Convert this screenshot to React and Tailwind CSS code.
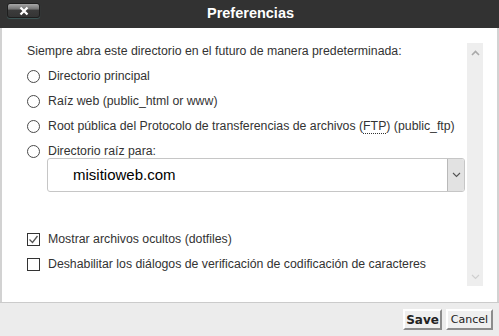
import React from 'react';

const Radio = () => (
    <span className="w-[13px] h-[13px] rounded-full border border-[#4a4a4a] bg-white shrink-0" />
);

const Check = ({ checked }) => (
    <span className="w-[13px] h-[13px] border border-[#333] bg-white shrink-0 flex items-center justify-center">
        {checked && (
            <svg width="11" height="11" viewBox="0 0 11 11">
                <path d="M1.5 5.5l3 3 5-6.5" fill="none" stroke="#555" strokeWidth="1.3" />
            </svg>
        )}
    </span>
);

export default function App() {
    return (
        <div className="w-[499px] h-[336px] flex flex-col bg-white overflow-hidden font-['Liberation_Sans',Arial,sans-serif] text-[#333]">
            {/* header */}
            <div className="relative h-[28px] shrink-0 bg-[#323232] flex items-center justify-center">
                <button className="absolute left-[7px] top-[3px] w-[33px] h-[15px] rounded-[3px] border border-[#1e1e1e] bg-[linear-gradient(#a8a8a8,#727272_40%,#3c3c3c_46%,#353535)] shadow-[0_1px_1px_#3e5858] flex items-center justify-center">
                    <svg width="10" height="10" viewBox="0 0 10 10">
                        <path d="M1.5 1.5l7 7M8.5 1.5l-7 7" stroke="white" strokeWidth="2.3" />
                    </svg>
                </button>
                <h1 className="text-white font-bold text-[14.5px] ml-[2px]">Preferencias</h1>
            </div>

            {/* body */}
            <div className="flex-1 min-h-0 flex border-l-2 border-r-2 border-[#d2d2d2]">
                <div className="flex-1 pl-[25px] pt-[11px] text-[12.3px]">
                    <div className="h-[25px] flex items-center">
                        Siempre abra este directorio en el futuro de manera predeterminada:
                    </div>
                    <label className="h-[25px] flex items-center gap-[8px]">
                        <Radio />
                        <span>Directorio principal</span>
                    </label>
                    <label className="h-[25px] flex items-center gap-[8px]">
                        <Radio />
                        <span>Raíz web (public_html or www)</span>
                    </label>
                    <label className="h-[25px] flex items-center gap-[8px]">
                        <Radio />
                        <span>
                            Root pública del Protocolo de transferencias de archivos (<abbr className="no-underline border-b border-dotted border-[#333]">FTP</abbr>) (public_ftp)
                        </span>
                    </label>
                    <label className="h-[25px] flex items-center gap-[8px]">
                        <Radio />
                        <span>Directorio raíz para:</span>
                    </label>

                    <div className="-mt-[6px] ml-[20px] w-[418px] h-[34px] flex border border-[#c6c6c6] rounded-[3px] overflow-hidden">
                        <div className="flex-1 flex items-center pl-[25px] text-[15px] text-black">
                            misitioweb.com
                        </div>
                        <div className="w-[17px] bg-[#e2e2e2] border-l border-[#b9b9b9] flex items-center justify-center">
                            <svg width="9" height="6" viewBox="0 0 9 6">
                                <path d="M1 1l3.5 3.5L8 1" fill="none" stroke="#555" strokeWidth="1.1" />
                            </svg>
                        </div>
                    </div>

                    <label className="mt-[35px] h-[25px] flex items-center gap-[8px]">
                        <Check checked />
                        <span>Mostrar archivos ocultos (dotfiles)</span>
                    </label>
                    <label className="h-[25px] flex items-center gap-[8px]">
                        <Check />
                        <span>Deshabilitar los diálogos de verificación de codificación de caracteres</span>
                    </label>
                </div>

                {/* scrollbar */}
                <div className="w-[16px] mt-[15px] mb-[16px] mr-[14px] bg-[#eeeeee] flex flex-col justify-between items-center pt-[7px] pb-[6px]">
                    <svg width="9" height="6" viewBox="0 0 9 6">
                        <path d="M1 5l3.5-3.5L8 5" fill="none" stroke="#a9a9a9" strokeWidth="1.6" />
                    </svg>
                    <svg width="9" height="6" viewBox="0 0 9 6">
                        <path d="M1 1l3.5 3.5L8 1" fill="none" stroke="#cfcfcf" strokeWidth="1.2" />
                    </svg>
                </div>
            </div>

            {/* footer */}
            <div className="h-[34px] shrink-0 border-t border-[#cbcbcb] bg-[#ececec] flex justify-end items-start pt-[6px] pr-[6px] gap-[4px] font-['DejaVu_Sans',Verdana,sans-serif] text-[#222]">
                <button className="h-[21px] w-[39px] bg-[#efefef] border-2 border-t-white border-l-white border-r-[#8c8c8c] border-b-[#8c8c8c] text-[12px] font-bold leading-none">
                    Save
                </button>
                <button className="h-[21px] w-[47px] bg-[#efefef] border-2 border-t-white border-l-white border-r-[#8c8c8c] border-b-[#8c8c8c] text-[11px] leading-none">
                    Cancel
                </button>
            </div>
        </div>
    );
}
